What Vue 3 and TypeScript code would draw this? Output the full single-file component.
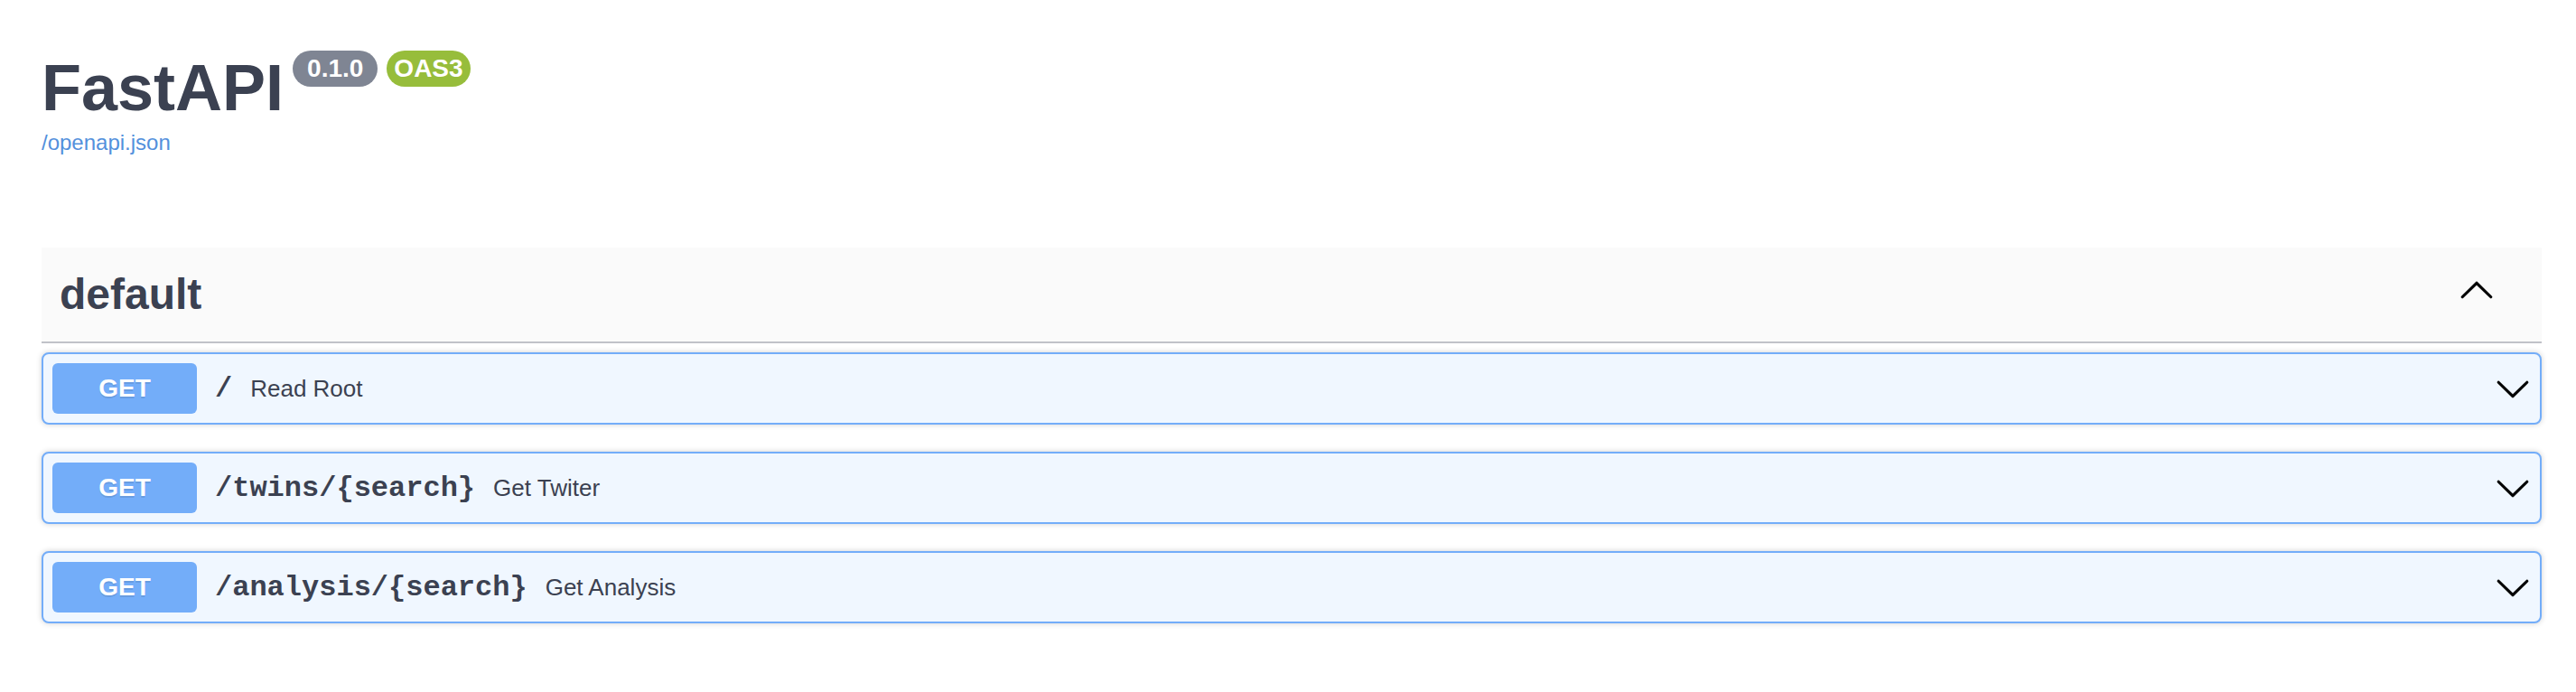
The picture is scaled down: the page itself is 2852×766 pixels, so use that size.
<script setup lang="ts">
import { ref } from 'vue'

interface Operation {
  method: string
  path: string
  summary: string
}

const operations: Operation[] = [
  { method: 'GET', path: '/', summary: 'Read Root' },
  { method: 'GET', path: '/twins/{search}', summary: 'Get Twiter' },
  { method: 'GET', path: '/analysis/{search}', summary: 'Get Analysis' },
]

const arrowUp =
  'M2.582 14.891c-.272.268-.709.268-.979 0s-.271-.701 0-.969l7.908-7.83c.27-.268.707-.268.979 0l7.908 7.83c.27.268.27.701 0 .969-.271.268-.709.268-.979 0L10 7.75l-7.418 7.141z'
const arrowDown =
  'M17.418 6.109c.272-.268.709-.268.979 0s.271.701 0 .969l-7.908 7.83c-.27.268-.707.268-.979 0l-7.908-7.83c-.27-.268-.27-.701 0-.969.271-.268.709-.268.979 0L10 13.25l7.418-7.141z'

const expanded = ref(true)
</script>

<template>
  <main class="page">
    <header class="info">
      <div class="heading">
        <h1 class="title">FastAPI</h1>
        <span class="badge">0.1.0</span>
        <span class="badge oas">OAS3</span>
      </div>
      <a class="spec" href="/openapi.json">/openapi.json</a>
    </header>

    <section>
      <div class="tag">
        <h2 class="tag-name">default</h2>
        <button
          class="toggle"
          type="button"
          aria-label="Toggle default operations"
          :aria-expanded="expanded"
          @click="expanded = !expanded"
        >
          <svg class="arrow" viewBox="0 0 20 20" aria-hidden="true">
            <path :d="expanded ? arrowUp : arrowDown" />
          </svg>
        </button>
      </div>

      <div v-if="expanded" class="operations">
        <button v-for="op in operations" :key="op.path" class="operation" type="button">
          <span class="method">{{ op.method }}</span>
          <span class="path">{{ op.path }}</span>
          <span class="summary">{{ op.summary }}</span>
          <svg class="arrow" viewBox="0 0 20 20" aria-hidden="true">
            <path :d="arrowDown" />
          </svg>
        </button>
      </div>
    </section>
  </main>
</template>

<style>
body {
  background: #fff;
}
</style>

<style scoped>
.page {
  padding: 56px 38px 76px 46px;
  color: #3b4151;
  font-family: "Liberation Sans", Arial, sans-serif;
}

.info {
  display: flex;
  flex-direction: column;
  align-items: flex-start;
  gap: 6px;
  margin-bottom: 102px;
}

.heading {
  display: flex;
  align-items: flex-start;
  gap: 10px;
}

.title {
  margin: 0;
  font-size: 72px;
  line-height: 82px;
}

.badge {
  padding: 0 16px;
  border-radius: 20px;
  background: #7f8593;
  color: #fff;
  font-size: 28px;
  font-weight: 700;
  line-height: 40px;
}

.badge.oas {
  padding: 0 8px;
  background: #97bd3b;
}

.spec {
  color: #5390dc;
  font-size: 24px;
  line-height: 28px;
  text-decoration: none;
}

.tag {
  display: flex;
  align-items: center;
  justify-content: space-between;
  padding: 24px 52px 24px 20px;
  border-bottom: 2px solid #c0c2c8;
  background: #fafafa;
}

.tag-name {
  margin: 0;
  font-size: 48px;
  line-height: 56px;
}

.toggle {
  display: flex;
  padding: 0 0 12px;
  border: 0;
  background: none;
  cursor: pointer;
}

.arrow {
  flex: none;
  width: 40px;
  height: 40px;
  fill: #000;
  stroke: #000;
  stroke-width: 0.15;
}

.operations {
  display: flex;
  flex-direction: column;
  gap: 30px;
  padding-top: 10px;
}

.operation {
  display: flex;
  align-items: center;
  gap: 20px;
  width: 100%;
  padding: 10px;
  border: 2px solid #73adf9;
  border-radius: 8px;
  background: #f0f7ff;
  box-shadow: 0 0 6px rgba(0, 0, 0, 0.19);
  color: inherit;
  font-family: inherit;
  text-align: left;
  cursor: pointer;
}

.method {
  min-width: 160px;
  border-radius: 6px;
  background: #73adf9;
  color: #fff;
  font-size: 28px;
  font-weight: 700;
  line-height: 56px;
  text-align: center;
  text-shadow: 0 2px 0 rgba(0, 0, 0, 0.1);
}

.path {
  font-family: "Liberation Mono", "Courier New", monospace;
  font-size: 32px;
  font-weight: 700;
}

.summary {
  flex: 1;
  font-size: 26px;
}
</style>
